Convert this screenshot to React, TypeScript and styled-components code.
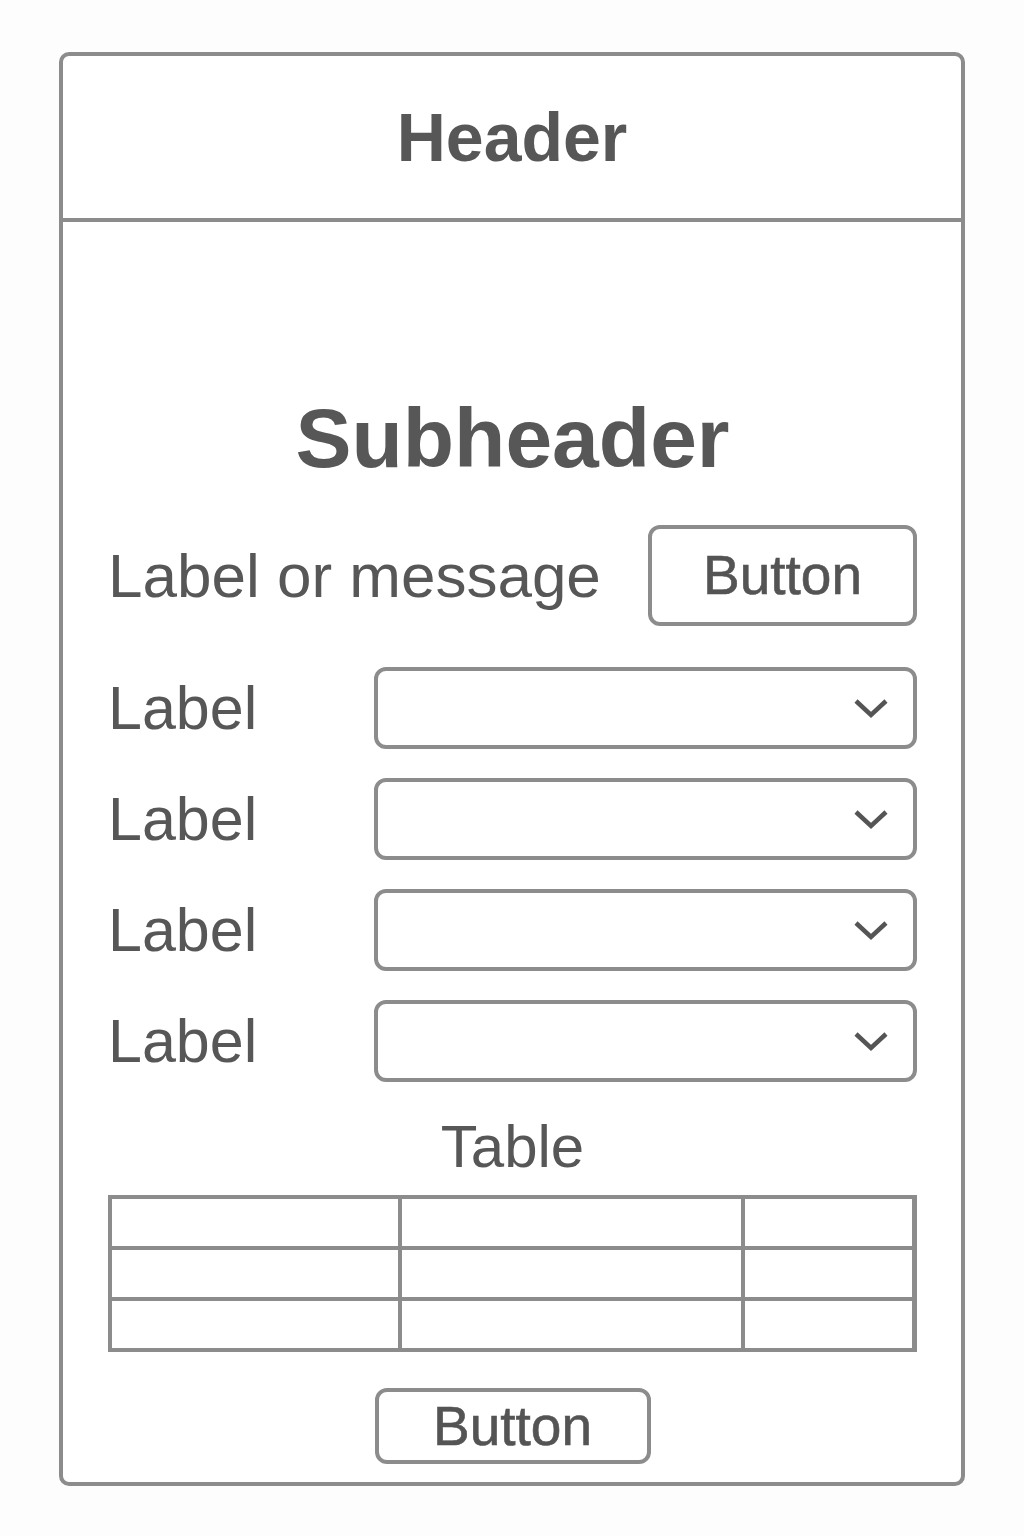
import styled, { createGlobalStyle } from "styled-components"

const GlobalStyle = createGlobalStyle`
  html, body {
    margin: 0;
    padding: 0;
    background: #fdfdfd;
  }
  body {
    font-family: "Liberation Sans", Arial, sans-serif;
    color: #575757;
  }
  * {
    box-sizing: border-box;
  }
`

const LINE = "#8c8c8c"

const Frame = styled.div`
  width: 906px;
  margin: 52px 0 0 59px;
  border: 4px solid ${LINE};
  border-radius: 10px;
  background: #fff;
  display: flex;
  flex-direction: column;
`

const Header = styled.header`
  height: 166px;
  border-bottom: 4px solid ${LINE};
  display: flex;
  align-items: center;
  justify-content: center;
  font-size: 68px;
  font-weight: 700;
  line-height: 1;
`

const Body = styled.div`
  padding: 0 44px 18px 45px;
  display: flex;
  flex-direction: column;
`

const Subheader = styled.h2`
  margin: 174px 0 0;
  text-align: center;
  font-size: 84px;
  font-weight: 700;
  line-height: 1;
`

const MessageRow = styled.div`
  margin-top: 45px;
  display: flex;
  align-items: center;
  justify-content: space-between;
`

const Text = styled.span<{ $size?: number }>`
  font-size: ${(p) => p.$size ?? 61}px;
  line-height: 1;
`

const OutlineButton = styled.button<{ $w: number; $h: number }>`
  width: ${(p) => p.$w}px;
  height: ${(p) => p.$h}px;
  border: 4px solid ${LINE};
  border-radius: 12px;
  background: #fff;
  color: #545454;
  font-family: "Liberation Sans", Arial, sans-serif;
  font-size: 55px;
  line-height: 1;
  padding: 0;
  -webkit-text-stroke: 0.6px #545454;
`

const Fields = styled.div`
  margin-top: 41px;
  display: grid;
  grid-template-columns: 266px 1fr;
  row-gap: 29px;
  align-items: center;
`

const Select = styled.div`
  height: 82px;
  border: 4px solid ${LINE};
  border-radius: 12px;
  display: flex;
  align-items: center;
  justify-content: flex-end;
  padding-right: 24px;
`

const TableTitle = styled.div`
  margin-top: 35px;
  text-align: center;
  font-size: 60px;
  line-height: 1;
`

const Grid = styled.div`
  margin-top: 18px;
  display: grid;
  grid-template-columns: 286px 339px 167px;
  grid-auto-rows: 47px;
  gap: 4px;
  padding: 4px;
  background: ${LINE};
`

const Cell = styled.div`
  background: #fff;
`

const Footer = styled.div`
  margin-top: 36px;
  display: flex;
  justify-content: center;
`

const Chevron = () => (
  <svg width="36" height="22" viewBox="0 0 36 22" fill="none">
    <path d="M3 4 L18 18 L33 4" stroke="#555" strokeWidth="4.5" />
  </svg>
)

export default function App() {
  return (
    <>
      <GlobalStyle />
      <Frame>
        <Header>Header</Header>
        <Body>
          <Subheader>Subheader</Subheader>
          <MessageRow>
            <Text $size={62}>Label or message</Text>
            <OutlineButton $w={269} $h={101}>Button</OutlineButton>
          </MessageRow>
          <Fields>
            {[0, 1, 2, 3].map((i) => [
              <Text key={`l${i}`}>Label</Text>,
              <Select key={`s${i}`}>
                <Chevron />
              </Select>,
            ])}
          </Fields>
          <TableTitle>Table</TableTitle>
          <Grid>
            {Array.from({ length: 9 }, (_, i) => (
              <Cell key={i} />
            ))}
          </Grid>
          <Footer>
            <OutlineButton $w={276} $h={76}>Button</OutlineButton>
          </Footer>
        </Body>
      </Frame>
    </>
  )
}
